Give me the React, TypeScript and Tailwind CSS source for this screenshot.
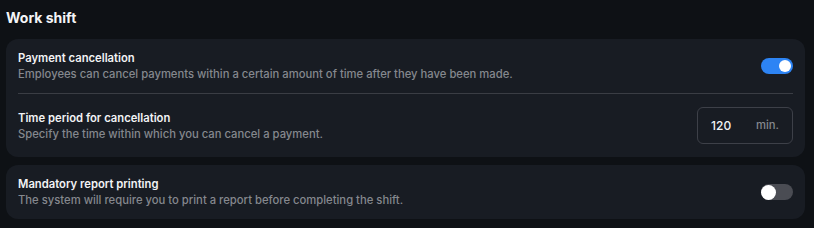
import React, { useState } from "react";

function Toggle({ on, onChange }: { on: boolean; onChange: () => void }) {
  return (
    <button
      type="button"
      onClick={onChange}
      className={
        on
          ? "relative flex h-[16px] w-[32px] shrink-0 items-center rounded-full bg-[#2d84f4] px-[2px] justify-end"
          : "relative flex h-[16px] w-[32px] shrink-0 items-center rounded-full bg-[#4a4c53] justify-start"
      }
    >
      <span
        className={
          on
            ? "block h-[12px] w-[12px] rounded-full bg-white"
            : "block h-[15px] w-[15px] rounded-full bg-white"
        }
      />
    </button>
  );
}

function Text({ title, desc }: { title: string; desc: string }) {
  return (
    <div className="flex flex-col">
      <div className="text-[11.25px] leading-[16px] font-semibold text-[#f2f3f5]">{title}</div>
      <div className="text-[11.25px] leading-[16px] font-medium text-[#85888e]">{desc}</div>
    </div>
  );
}

export default function App() {
  const [a, setA] = useState(true);
  const [b, setB] = useState(false);
  return (
    <div
      className="w-[814px] h-[228px] bg-[#0e1115] pl-[6px] pt-[8px]"
      style={{ fontFamily: "Inter, 'Noto Sans', sans-serif" }}
    >
      <h1 className="text-[14px] leading-[20px] font-bold text-[#f4f5f7] mb-[11px]">Work shift</h1>
      <div className="flex w-[799px] flex-col gap-[8px]">
        <div className="rounded-[12px] bg-[#181c23] px-[12px]">
          <div className="flex items-center justify-between py-[11px]">
            <Text
              title="Payment cancellation"
              desc="Employees can cancel payments within a certain amount of time after they have been made."
            />
            <Toggle on={a} onChange={() => setA(!a)} />
          </div>
          <div className="h-px bg-[#3a3d44]" />
          <div className="flex items-center justify-between py-[13px]">
            <Text
              title="Time period for cancellation"
              desc="Specify the time within which you can cancel a payment."
            />
            <div className="flex h-[37px] w-[96px] items-center justify-between rounded-[6px] border border-[#3d4048] pl-[13px] pr-[13px]">
              <span className="text-[12px] font-medium text-[#f2f3f5]">120</span>
              <span className="text-[11.25px] font-medium text-[#85888e]">min.</span>
            </div>
          </div>
        </div>
        <div className="rounded-[12px] bg-[#181c23] px-[12px]">
          <div className="flex items-center justify-between py-[11px]">
            <Text
              title="Mandatory report printing"
              desc="The system will require you to print a report before completing the shift."
            />
            <Toggle on={b} onChange={() => setB(!b)} />
          </div>
        </div>
      </div>
    </div>
  );
}
